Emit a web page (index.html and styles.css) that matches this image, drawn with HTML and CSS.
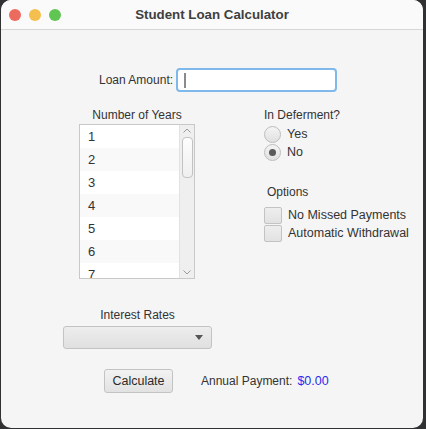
FILE: index.html
```html
<!DOCTYPE html>
<html>
<head>
<meta charset="utf-8">
<link rel="stylesheet" href="styles.css">
</head>
<body>
<div class="window">
  <div class="titlebar">
    <div class="lights">
      <span class="light red"></span>
      <span class="light yellow"></span>
      <span class="light green"></span>
    </div>
    <div class="title">Student Loan Calculator</div>
  </div>
  <div class="content">
    <div class="loan-row">
      <span class="label">Loan Amount:</span>
      <div class="field"><span class="caret"></span></div>
    </div>
    <div class="main">
      <div class="years">
        <div class="col-head">Number of Years</div>
        <div class="list">
          <div class="rows">
            <div class="row">1</div>
            <div class="row alt">2</div>
            <div class="row">3</div>
            <div class="row alt">4</div>
            <div class="row">5</div>
            <div class="row alt">6</div>
            <div class="row">7</div>
          </div>
          <div class="scrollbar">
            <svg class="arrow" width="10" height="8" viewBox="0 0 10 8"><path d="M1.5 5.5 L5 2 L8.5 5.5" fill="none" stroke="#9a9a9a" stroke-width="1"/></svg>
            <div class="track"><div class="thumb"></div></div>
            <svg class="arrow" width="10" height="8" viewBox="0 0 10 8"><path d="M1.5 2.5 L5 6 L8.5 2.5" fill="none" stroke="#9a9a9a" stroke-width="1"/></svg>
          </div>
        </div>
      </div>
      <div class="side">
        <div class="side-head">In Deferment?</div>
        <div class="radio-row"><span class="radio"></span><span>Yes</span></div>
        <div class="radio-row"><span class="radio on"></span><span>No</span></div>
        <div class="opt-head">Options</div>
        <div class="check-row"><span class="check"></span><span>No Missed Payments</span></div>
        <div class="check-row"><span class="check"></span><span>Automatic Withdrawal</span></div>
      </div>
    </div>
    <div class="rates">
      <div class="rates-head">Interest Rates</div>
      <div class="combo"><span class="tri"></span></div>
    </div>
    <div class="bottom">
      <div class="button">Calculate</div>
      <span class="pay-label">Annual Payment:</span>
      <span class="pay-value">$0.00</span>
    </div>
  </div>
</div>
</body>
</html>
```
FILE: styles.css
```css
html, body {
  margin: 0;
  padding: 0;
}
* {
  box-sizing: border-box;
}
body {
  background: #2f3133;
  width: 426px;
  height: 429px;
  overflow: hidden;
  font-family: "Liberation Sans", Arial, sans-serif;
  font-size: 12px;
  color: #333333;
}
.window {
  margin-left: 1px;
  width: 422px;
  height: 428px;
  background: #f5f5f5;
  border-radius: 10px;
  overflow: hidden;
}
.titlebar {
  height: 30px;
  background: #fafafa;
  border-bottom: 1px solid #d6d6d6;
  display: flex;
  align-items: center;
  position: relative;
}
.lights {
  display: flex;
  gap: 8px;
  padding-left: 8px;
}
.light {
  width: 12px;
  height: 12px;
  border-radius: 50%;
}
.red { background: #ec6a5e; }
.yellow { background: #f4bf4f; }
.green { background: #61c554; }
.title {
  position: absolute;
  left: 0;
  right: 0;
  text-align: center;
  font-weight: bold;
  font-size: 13.3px;
  color: #404040;
}
.content {
  display: flex;
  flex-direction: column;
}
.loan-row {
  margin-top: 38px;
  padding-left: 98px;
  display: flex;
  align-items: center;
  gap: 3px;
  line-height: 14px;
}
.field {
  width: 161px;
  height: 24px;
  background: #ffffff;
  border: 2px solid #7fb8ea;
  border-radius: 4px;
  display: flex;
  align-items: center;
  padding-left: 6px;
}
.caret {
  width: 2px;
  height: 15px;
  background: #8a8a8a;
}
.main {
  display: flex;
  margin-top: 16px;
  line-height: 14px;
}
.years {
  margin-left: 78px;
  width: 116px;
  display: flex;
  flex-direction: column;
  gap: 2px;
}
.col-head {
  text-align: center;
}
.list {
  height: 155px;
  border: 1px solid #c8c8c8;
  background: #ffffff;
  display: flex;
  overflow: hidden;
}
.rows {
  flex: 1;
  display: flex;
  flex-direction: column;
}
.row {
  height: 23px;
  flex: none;
  line-height: 23px;
  padding-left: 8px;
  font-size: 13px;
  background: #ffffff;
}
.row.alt {
  background: #f9f9f9;
}
.scrollbar {
  width: 15px;
  background: #efefef;
  border-left: 1px solid #e2e2e2;
  display: flex;
  flex-direction: column;
  align-items: center;
}
.arrow {
  flex: none;
  margin: 2px 0;
}
.track {
  flex: 1;
  width: 100%;
  display: flex;
  justify-content: center;
}
.thumb {
  width: 11px;
  height: 41px;
  background: linear-gradient(#fdfdfd, #efefef);
  border: 1px solid #c2c2c2;
  border-radius: 4px;
}
.side {
  margin-left: 69px;
  display: flex;
  flex-direction: column;
}
.radio-row, .check-row {
  display: flex;
  align-items: center;
  gap: 6px;
  height: 18px;
  font-size: 12.5px;
}
.side-head {
  margin-bottom: 3px;
}
.radio {
  width: 17px;
  height: 17px;
  border-radius: 50%;
  border: 1px solid #bdbdbd;
  background: linear-gradient(#f4f4f4, #e0e0e0);
  display: flex;
  align-items: center;
  justify-content: center;
}
.radio.on::after {
  content: "";
  width: 7px;
  height: 7px;
  border-radius: 50%;
  background: #5a5a5a;
}
.opt-head {
  margin-top: 24px;
  margin-left: 3px;
  margin-bottom: 7px;
}
.check {
  width: 18px;
  height: 17px;
  border: 1px solid #c3c3c3;
  border-radius: 2px;
  background: linear-gradient(#eeeeee, #e2e2e2);
}
.rates {
  margin-top: 29px;
  margin-left: 62px;
  width: 149px;
  display: flex;
  flex-direction: column;
  gap: 4px;
  line-height: 14px;
}
.rates-head {
  text-align: center;
}
.combo {
  height: 23px;
  border: 1px solid #c3c3c3;
  border-radius: 3px;
  background: linear-gradient(#ededed, #e0e0e0);
  display: flex;
  align-items: center;
  justify-content: flex-end;
  padding-right: 8px;
}
.tri {
  width: 0;
  height: 0;
  border-left: 4.5px solid transparent;
  border-right: 4.5px solid transparent;
  border-top: 5px solid #555555;
}
.bottom {
  margin-top: 20px;
  margin-left: 103px;
  display: flex;
  align-items: center;
}
.button {
  width: 69px;
  height: 24px;
  border: 1px solid #c3c3c3;
  border-radius: 3px;
  background: linear-gradient(#f2f2f2, #e2e2e2);
  display: flex;
  align-items: center;
  justify-content: center;
  font-size: 12.5px;
  color: #2a2a2a;
}
.pay-label {
  margin-left: 28px;
}
.pay-value {
  margin-left: 5px;
  font-size: 12.5px;
  color: #2a2af0;
}
```
